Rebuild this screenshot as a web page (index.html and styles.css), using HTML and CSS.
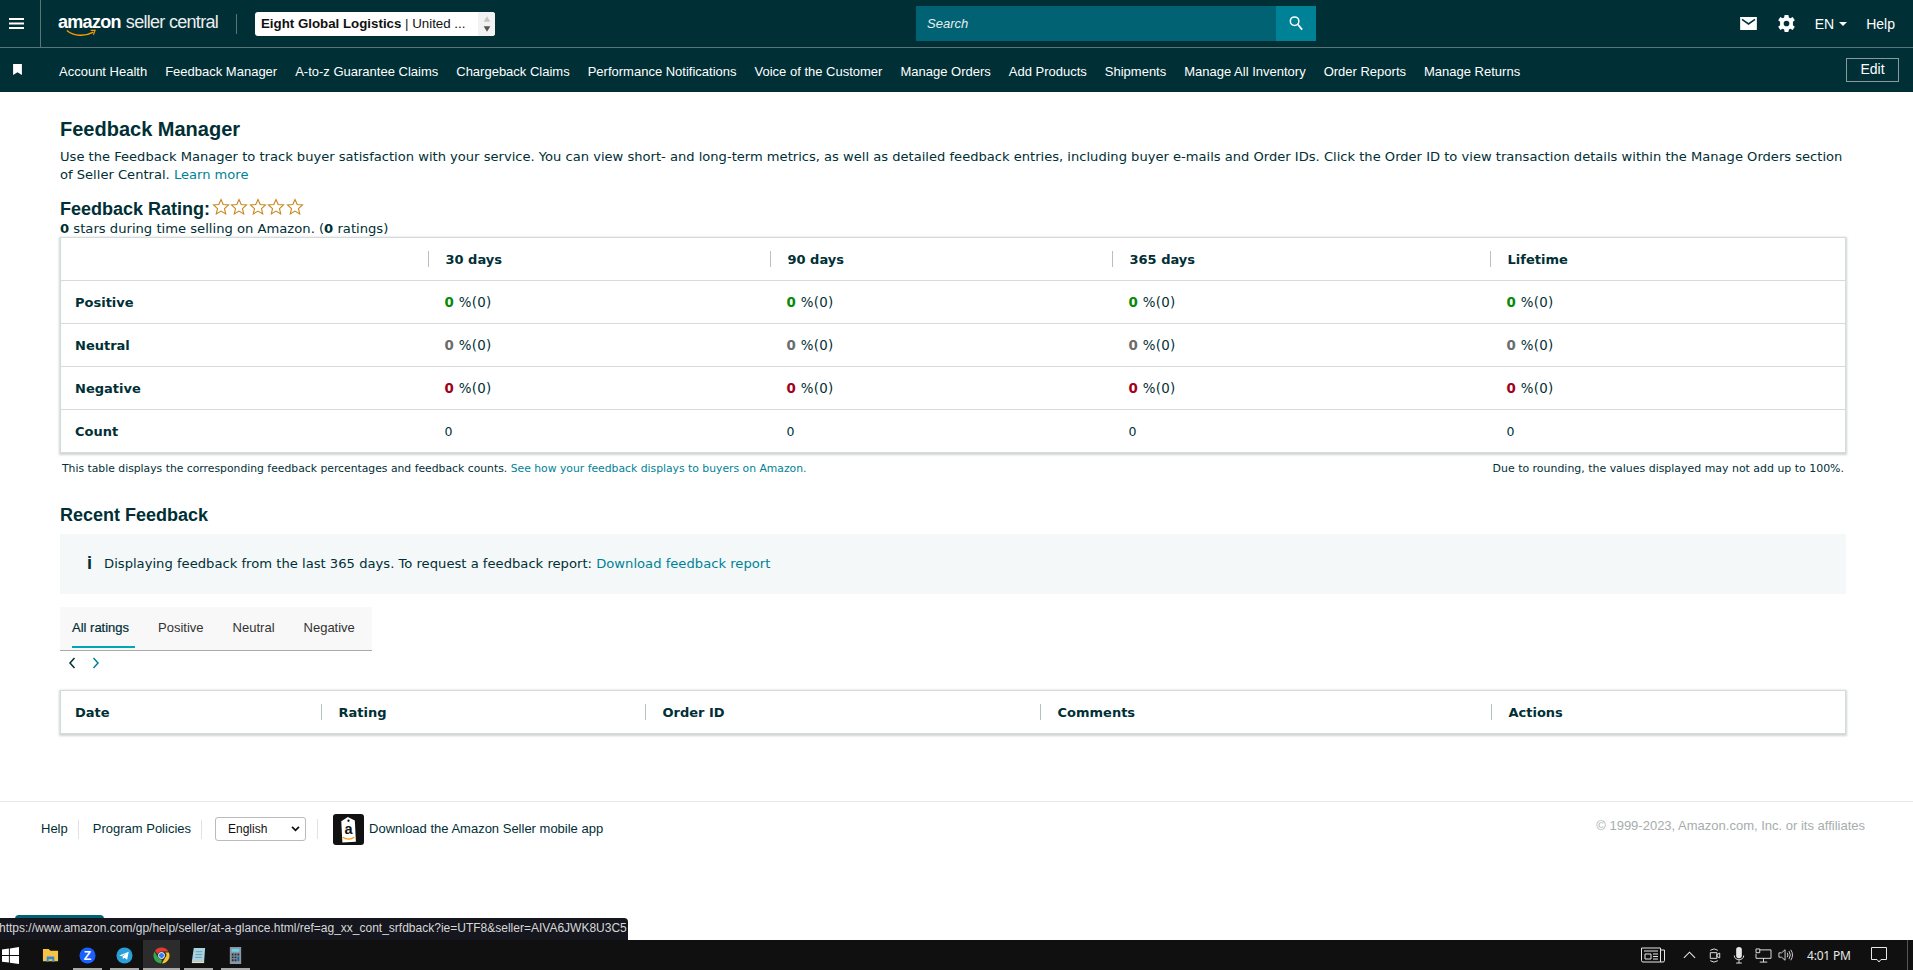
FILE: index.html
```html
<!DOCTYPE html>
<html lang="en">
<head>
<meta charset="utf-8">
<title>Feedback Manager</title>
<link rel="stylesheet" href="styles.css">
</head>
<body>
<div class="page">
<header class="topbar">
  <div class="menu-cell">
    <svg class="ic-menu" viewBox="0 0 15 11"><path d="M0 1h15M0 5.500h15M0 10h15" stroke="#fff" stroke-width="1.800"/></svg>
  </div>
  <div class="brand">
    <span class="logo-word">amazon<svg class="smile" viewBox="0 0 34 9"><path d="M1 1c8 7 21 7 30 2" fill="none" stroke="#f90" stroke-width="1.600"/><path d="M28 1l5 0-2 5" fill="none" stroke="#f90" stroke-width="1.300"/></svg></span>
    <span class="logo-sub">seller central</span>
  </div>
  <div class="account">
    <span class="account-text"><b>Eight Global Logistics</b> | United ...</span>
    <span class="spin"><svg viewBox="0 0 9 18"><path d="M4.500 2l3 5h-6z" fill="#c4c4c4"/><path d="M4.500 16l3-5h-6z" fill="#555"/></svg></span>
  </div>
  <div class="search">
    <span class="search-input">Search</span>
    <span class="search-btn"><svg viewBox="0 0 16 18"><circle cx="6.500" cy="6.500" r="4.500" fill="none" stroke="#fff" stroke-width="1.600"/><path d="M10 10l4.500 5.500" stroke="#fff" stroke-width="1.800"/></svg></span>
  </div>
  <div class="top-right">
    <svg class="ic-mail" viewBox="0 0 18 14"><path d="M0 0h18v14H0z" fill="#fff"/><path d="M2 2.500l7 5 7-5" fill="none" stroke="#002f36" stroke-width="1.600"/></svg>
    <svg class="ic-gear" viewBox="0 0 18 18"><path fill="#fff" fill-rule="evenodd" d="M7 0h4l.5 2.600 1.600.8L15.500 2l2.300 3.500-2 1.700v3.600l2 1.700-2.300 3.500-2.400-1.400-1.600.8L11 18H7l-.5-2.600-1.600-.8L2.500 16 .2 12.500l2-1.700V7.200l-2-1.700L2.500 2l2.400 1.400 1.600-.8zM9 6a3 3 0 1 0 0 6 3 3 0 0 0 0-6z"/></svg>
    <span class="lang">EN<i class="caret"></i></span>
    <span class="help">Help</span>
  </div>
</header>
<nav class="navbar">
  <svg class="ic-bookmark" viewBox="0 0 8 10"><path d="M0 0h8v10L4 7.500 0 10z" fill="#fff"/></svg>
  <ul class="nav-links">
    <li>Account Health</li><li>Feedback Manager</li><li>A-to-z Guarantee Claims</li><li>Chargeback Claims</li><li>Performance Notifications</li><li>Voice of the Customer</li><li>Manage Orders</li><li>Add Products</li><li>Shipments</li><li>Manage All Inventory</li><li>Order Reports</li><li>Manage Returns</li>
  </ul>
  <span class="edit">Edit</span>
</nav>
<main class="content">
  <h1 class="title">Feedback Manager</h1>
  <p class="intro">Use the Feedback Manager to track buyer satisfaction with your service. You can view short- and long-term metrics, as well as detailed feedback entries, including buyer e-mails and Order IDs. Click the Order ID to view transaction details within the Manage Orders section of Seller Central. <a>Learn more</a></p>
  <div class="rating-head"><span class="rating-title">Feedback Rating:</span>
    <span class="stars">
      <svg viewBox="0 0 18 18"><path class="star" d="M9 1.500l2.200 5 5.300.5-4 3.600 1.200 5.300L9 13.100l-4.700 2.800 1.200-5.300-4-3.600 5.300-.5z"/></svg>
      <svg viewBox="0 0 18 18"><path class="star" d="M9 1.500l2.200 5 5.300.5-4 3.600 1.200 5.300L9 13.100l-4.700 2.800 1.200-5.300-4-3.600 5.300-.5z"/></svg>
      <svg viewBox="0 0 18 18"><path class="star" d="M9 1.500l2.200 5 5.300.5-4 3.600 1.200 5.300L9 13.100l-4.700 2.800 1.200-5.300-4-3.600 5.300-.5z"/></svg>
      <svg viewBox="0 0 18 18"><path class="star" d="M9 1.500l2.200 5 5.300.5-4 3.600 1.200 5.300L9 13.100l-4.700 2.800 1.200-5.300-4-3.600 5.300-.5z"/></svg>
      <svg viewBox="0 0 18 18"><path class="star" d="M9 1.500l2.200 5 5.300.5-4 3.600 1.200 5.300L9 13.100l-4.700 2.800 1.200-5.300-4-3.600 5.300-.5z"/></svg>
    </span>
  </div>
  <p class="rating-sub"><b>0</b> stars during time selling on Amazon. (<b>0</b> ratings)</p>
  <table class="tbl metrics">
    <thead><tr><th class="c0"></th><th class="c1"><span>30 days</span></th><th class="c2"><span>90 days</span></th><th class="c3"><span>365 days</span></th><th class="c4"><span>Lifetime</span></th></tr></thead>
    <tbody>
      <tr><th>Positive</th><td><b class="pos">0</b> %(0)</td><td><b class="pos">0</b> %(0)</td><td><b class="pos">0</b> %(0)</td><td><b class="pos">0</b> %(0)</td></tr>
      <tr><th>Neutral</th><td><b class="neu">0</b> %(0)</td><td><b class="neu">0</b> %(0)</td><td><b class="neu">0</b> %(0)</td><td><b class="neu">0</b> %(0)</td></tr>
      <tr><th>Negative</th><td><b class="neg">0</b> %(0)</td><td><b class="neg">0</b> %(0)</td><td><b class="neg">0</b> %(0)</td><td><b class="neg">0</b> %(0)</td></tr>
      <tr><th>Count</th><td class="count">0</td><td class="count">0</td><td class="count">0</td><td class="count">0</td></tr>
    </tbody>
  </table>
  <div class="notes"><span>This table displays the corresponding feedback percentages and feedback counts. <a>See how your feedback displays to buyers on Amazon.</a></span><span class="note-right">Due to rounding, the values displayed may not add up to 100%.</span></div>
  <h2 class="recent">Recent Feedback</h2>
  <div class="info"><span class="info-i">i</span><span>Displaying feedback from the last 365 days. To request a feedback report: <a>Download feedback report</a></span></div>
  <div class="tabs"><span class="tab active">All ratings</span><span class="tab">Positive</span><span class="tab">Neutral</span><span class="tab">Negative</span></div>
  <div class="pager">
    <svg viewBox="0 0 8 12"><path d="M6.500 1L2 6l4.500 5" fill="none" stroke="#002f36" stroke-width="1.500"/></svg>
    <svg viewBox="0 0 8 12"><path d="M1.500 1L6 6l-4.500 5" fill="none" stroke="#008296" stroke-width="1.500"/></svg>
  </div>
  <table class="tbl orders">
    <thead><tr><th class="d0">Date</th><th class="d1"><span>Rating</span></th><th class="d2"><span>Order ID</span></th><th class="d3"><span>Comments</span></th><th class="d4"><span>Actions</span></th></tr></thead>
  </table>
</main>
<footer class="footer">
  <div class="foot-left">
    <span class="foot-link">Help</span><span class="foot-link">Program Policies</span>
    <span class="foot-select">English<svg viewBox="0 0 10 7"><path d="M1 1l4 4 4-4" fill="none" stroke="#111" stroke-width="2"/></svg></span>
    <span class="foot-app">
      <span class="app-badge"><svg viewBox="0 0 32 32"><path d="M9 7l7-4 7 4v22H9z" fill="#fff" transform="rotate(-3 16 16)"/><circle cx="16" cy="7" r="1.200" fill="#111"/><text x="16" y="21" text-anchor="middle" class="app-a">a</text><path d="M10 24c4 2.500 8 2.500 12 0" fill="none" stroke="#f90" stroke-width="1.400"/></svg></span>
      <span class="app-text">Download the Amazon Seller mobile app</span>
    </span>
  </div>
  <div class="copyright">© 1999-2023, Amazon.com, Inc. or its affiliates</div>
</footer>
<div class="status-wrap">
  <div class="peek"></div>
  <div class="status">https://www.amazon.com/gp/help/seller/at-a-glance.html/ref=ag_xx_cont_srfdback?ie=UTF8&amp;seller=AIVA6JWK8U3C5</div>
</div>
<div class="taskbar">
  <div class="task-left">
    <span class="task win"><svg viewBox="0 0 16 16"><path d="M0 2.300L6.500 1.400v6.200H0zM7.400 1.300L16 0v7.600H7.400zM0 8.500h6.500v6.200L0 13.800zM7.400 8.500H16V16l-8.600-1.200z" fill="#fff"/></svg></span>
    <span class="task"><svg viewBox="0 0 18 16"><path d="M1 1h6l2 2h8v11H1z" fill="#f6c445"/><path d="M5 9h8v6h-2v-3H7v3H5z" fill="#2b88d8"/></svg></span>
    <span class="task"><svg viewBox="0 0 18 18"><circle cx="9" cy="9" r="8.500" fill="#1a5fff"/><text x="9" y="13.500" text-anchor="middle" class="z-text">Z</text></svg><i class="run"></i></span>
    <span class="task"><svg viewBox="0 0 18 18"><circle cx="9" cy="9" r="8.500" fill="#2a9fd8"/><path d="M3.500 9l10-4-1.700 8.500-3-2.200-1.500 1.500-.4-2.700 4.300-3.600-5.300 3.200z" fill="#fff"/></svg><i class="run"></i></span>
    <span class="task active"><svg viewBox="0 0 18 18"><path d="M9 .5a8.500 8.500 0 0 1 7.400 4.300H9a4.200 4.200 0 0 0-4 3L2.100 3.900A8.500 8.500 0 0 1 9 .5z" fill="#e33b2e"/><path d="M16.800 5.700A8.500 8.500 0 0 1 9.400 17.500l3.500-6a4.200 4.200 0 0 0 0-5.800z" fill="#f8c32c"/><path d="M8.500 17.500A8.500 8.500 0 0 1 1.600 4.800l3.700 6.300a4.200 4.200 0 0 0 4.300 2.100z" fill="#34a74b"/><circle cx="9" cy="9" r="3.200" fill="#3b7de8" stroke="#fff" stroke-width="1"/></svg><i class="run"></i></span>
    <span class="task"><svg viewBox="0 0 16 18"><path d="M3 1h12l-1 14H1z" fill="#a9d3e0"/><path d="M1 15h13v2H1z" fill="#e8e2c8"/><path d="M5 5h7M5 8h7M4.500 11h7" stroke="#5b8aa0" stroke-width=".8"/></svg><i class="run"></i></span>
    <span class="task"><svg viewBox="0 0 12 18"><path d="M0 0h12v18H0z" fill="#8a96a0"/><path d="M2 2h8v3H2z" fill="#6cd0f0"/><path d="M2 7h2v2H2zM5 7h2v2H5zM8 7h2v2H8zM2 10h2v2H2zM5 10h2v2H5zM2 13h2v2H2zM5 13h2v2H5z" fill="#22303a"/><path d="M8 10h2v5H8z" fill="#1f5fa8"/></svg><i class="run"></i></span>
  </div>
  <div class="task-right">
    <svg class="t-news" viewBox="0 0 24 16"><path d="M.5 1h19v14H2a1.500 1.500 0 0 1-1.500-1.500zM19.500 3h4v10.500a1.500 1.500 0 0 1-1.500 1.500h-2.500M3 4h14M4 7h6v5H4zM12 7h5M12 9.500h5M12 12h5" fill="none" stroke="#e8e8e8"/></svg>
    <svg class="t-up" viewBox="0 0 14 8"><path d="M1 7l6-6 6 6" fill="none" stroke="#e8e8e8" stroke-width="1.200"/></svg>
    <svg class="t-cam" viewBox="0 0 12 18"><path d="M1 6h7v6H1zM8 8l3-1.500v5L8 10zM1 3.500Q5 .5 9 3.500M1 14.500q4 3 8 0" fill="none" stroke="#e8e8e8"/></svg>
    <svg class="t-mic" viewBox="0 0 12 18"><rect x="3" y="0" width="6" height="12" rx="3" fill="#e8e8e8"/><path d="M1 9c0 6 10 6 10 0M6 14v3M3 17h6" fill="none" stroke="#e8e8e8"/></svg>
    <svg class="t-net" viewBox="0 0 18 16"><path d="M5 2h12v9H1V6M9 11v4M5 15h8" fill="none" stroke="#e8e8e8"/><path d="M1 1h4v4H1z" fill="none" stroke="#e8e8e8"/></svg>
    <svg class="t-vol" viewBox="0 0 17 16"><path d="M1 5.500h3L8 2v12L4 10.500H1zM10.500 5.500q1.500 2.500 0 5M12.500 3.500q3 4.500 0 9M14.500 2q4 6 0 12" fill="none" stroke="#e8e8e8"/></svg>
    <span class="clock">4:01 PM</span>
    <svg class="t-note" viewBox="0 0 16 16"><path d="M.5.500h15v12H10L8 15l-2-2.500H.5z" fill="none" stroke="#e8e8e8"/></svg>
    <i class="t-edge"></i>
  </div>
</div>
</div>
</body>
</html>
```
FILE: styles.css
```css
* { box-sizing: border-box; }
html, body { margin: 0; padding: 0; height: 100%; overflow: hidden; background: #fff; }
body { font-family: "DejaVu Sans", Verdana, sans-serif; color: #002f36; font-size: 13.150px; }
a { color: #008296; }
.page { display: flex; flex-direction: column; height: 970px; position: relative; }

.topbar { height: 48px; background: #002f36; display: flex; align-items: center; border-bottom: 1px solid #5c7478; font-family: "Liberation Sans", Arial, sans-serif; color: #fff; flex: none; }
.menu-cell { width: 41px; height: 47px; border-right: 1px solid #5c7478; display: flex; align-items: center; padding-left: 9px; }
.ic-menu { width: 15px; height: 11px; }
.brand { display: flex; align-items: center; margin-left: 17px; width: 179px; gap: 5px; border-right: 1px solid #5c7478; height: 20px; }
.logo-word { font-size: 18px; font-weight: 700; letter-spacing: -.7px; position: relative; line-height: 16px; margin-top: -4px; }
.smile { position: absolute; left: 8px; top: 15px; width: 30px; height: 9px; }
.logo-sub { font-size: 18px; font-weight: 400; letter-spacing: -.7px; line-height: 16px; margin-top: -4px; opacity: .92; }
.account { margin-left: 18px; width: 240px; height: 24px; background: #fff; border-radius: 3px; color: #111; font-size: 13.300px; display: flex; align-items: center; padding-left: 6px; justify-content: space-between; white-space: nowrap; }
.account-text b { font-weight: 700; }
.spin { width: 17px; height: 24px; background: #f2f2f2; display: flex; align-items: center; justify-content: center; border-radius: 0 3px 3px 0; }
.spin svg { width: 14px; height: 20px; }
.search { margin-left: 421px; width: 400px; height: 35px; background: #006272; display: flex; align-items: center; justify-content: space-between; }
.search-input { font-style: italic; font-size: 13px; padding-left: 11px; color: #e6f0f1; }
.search-btn { width: 40px; height: 35px; background: #008296; display: flex; align-items: center; justify-content: center; }
.search-btn svg { width: 16px; height: 17px; }
.top-right { margin-left: auto; display: flex; align-items: center; padding-right: 18px; font-size: 14px; }
.ic-mail { width: 17px; height: 13px; }
.ic-gear { width: 17px; height: 17px; margin-left: 21px; }
.lang { margin-left: 20px; display: flex; align-items: center; }
.caret { width: 0; height: 0; border: 4.500px solid transparent; border-top: 4.500px solid #fff; border-bottom: 0; margin-left: 5px; }
.help { margin-left: 19px; }

.navbar { height: 44px; background: #002f36; display: flex; align-items: center; color: #fff; font-family: "Liberation Sans", Arial, sans-serif; font-size: 13px; flex: none; padding-right: 14px; }
.ic-bookmark { width: 9px; height: 11px; margin: -2px 0 0 13px; }
.nav-links { list-style: none; display: flex; margin: 2px 0 0 37px; padding: 0; gap: 18px; white-space: nowrap; }
.edit { margin-left: auto; width: 53px; height: 24px; border: 1px solid #8a9a9c; text-align: center; line-height: 20px; font-size: 14px; }

.content { padding: 0 67px 0 60px; flex: none; }
.title { font-family: "Liberation Sans", Arial, sans-serif; font-size: 20px; font-weight: 700; line-height: 24px; margin: 25px 0 0; }
.intro { margin: 7px 0 0; line-height: 18px; font-size: 13.080px; }
.rating-head { display: flex; align-items: center; margin-top: 14px; height: 22px; }
.rating-title { font-family: "Liberation Sans", Arial, sans-serif; font-size: 18px; font-weight: 700; }
.stars { display: flex; margin-left: 2px; margin-top: -4px; }
.stars svg { width: 18px; height: 18px; display: block; margin-right: .4px; }
.star { fill: none; stroke: #c7861d; stroke-width: 1.100; }
.rating-sub { margin: 2px 0 0; line-height: 14px; padding-bottom: 1px; }

.tbl { width: 100%; border-collapse: collapse; table-layout: fixed; border: 1px solid #d5dbdb; box-shadow: 0 1px 2px 1px #d0d5d5; }
.tbl th { text-align: left; font-weight: 700; font-size: 13px; padding: 0 0 0 14px; }
.tbl td { padding: 0 0 0 17px; font-size: 13.400px; letter-spacing: .3px; }
.tbl td.count { font-size: 12.500px; letter-spacing: 0; }
.metrics tr { height: 43px; border-bottom: 1px solid #d5dbdb; }
.metrics tbody tr:last-child { border-bottom: 0; }
.metrics thead th { padding-left: 0; }
.metrics thead th span { display: block; border-left: 1px solid #b5c0c0; padding: 1px 0 0 17px; line-height: 15px; }
.c0 { width: 367px; }
.c1, .c2 { width: 342px; }
.c3 { width: 378px; }
.pos { color: #078a07; }
.neu { color: #6c6c6c; }
.neg { color: #a1001c; }
.count { color: #002f36; }
.notes { display: flex; justify-content: space-between; font-size: 10.800px; margin-top: 9px; padding: 0 2px; line-height: 14px; }
.note-right { font-size: 10.950px; }
.recent { font-family: "Liberation Sans", Arial, sans-serif; font-size: 18px; font-weight: 700; margin: 28px 0 0; line-height: 22px; }
.info { height: 60px; margin-top: 8px; background: #f4f8f8; display: flex; align-items: center; padding: 0 0 2px 27px; gap: 12px; }
.info-i { font-weight: 700; font-size: 18px; font-family: "Liberation Sans", Arial, sans-serif; }
.tabs { width: 312px; height: 44px; margin-top: 13px; background: #f8f8f8; border-bottom: 1px solid #a9a9a9; display: flex; font-family: "Liberation Sans", Arial, sans-serif; font-size: 13px; padding-left: 12px; gap: 23px; color: #333; }
.tab { padding-right: 6px; line-height: 41px; height: 41px; }
.tab.active { color: #002f36; border-bottom: 2px solid #00a8b4; -webkit-text-stroke: .2px #002f36; }
.pager { display: flex; gap: 16px; height: 22px; align-items: center; padding-left: 8px; margin-top: 1px; }
.pager svg { width: 8px; height: 12px; }
.orders { margin-top: 16px; }
.orders tr { height: 43px; }
.orders th { padding: 0; }
.orders th span { display: block; border-left: 1px solid #b5c0c0; padding: 1px 0 0 17px; line-height: 15px; }
.orders .d0 { padding-left: 14px; width: 260px; }
.d1 { width: 324px; }
.d2 { width: 395px; }
.d3 { width: 451px; }

.footer { margin-top: 67px; border-top: 1px solid #e7e9e9; padding: 11px 48px 0 41px; display: flex; justify-content: space-between; font-family: "Liberation Sans", Arial, sans-serif; flex: none; }
.foot-left { display: flex; align-items: center; font-size: 13px; height: 32px; }
.foot-link { padding: 0 10px 1px 0; margin-right: 14px; border-right: 1px solid #e0e3e3; line-height: 18px; }
.foot-select { width: 91px; height: 24px; border: 1px solid #bbb; border-radius: 3px; display: flex; align-items: center; justify-content: space-between; padding: 0 5px 0 12px; color: #111; font-size: 12px; margin-left: -1px; }
.foot-select svg { width: 9px; height: 6px; }
.foot-app { display: flex; align-items: center; gap: 5px; border-left: 1px solid #e0e3e3; margin-left: 11px; padding-left: 15px; height: 20px; }
.app-text { padding-bottom: 2px; }
.app-badge { width: 31px; height: 31px; background: #111; border-radius: 3px; flex: none; }
.app-badge svg { width: 31px; height: 31px; display: block; }
.app-a { font-family: "Liberation Sans", sans-serif; font-weight: 700; font-size: 15px; fill: #111; }
.copyright { color: #a6adad; font-size: 13px; padding-top: 5px; }

.status-wrap { position: absolute; left: 0; bottom: 30px; }
.peek { position: absolute; left: 15px; top: -3px; width: 89px; height: 8px; background: #006272; border-radius: 4px 4px 0 0; }
.status { position: relative; background: #15161e; color: #d8d8d8; font-family: "Liberation Sans", Arial, sans-serif; font-size: 12px; height: 22px; line-height: 20px; width: 628px; white-space: nowrap; overflow: hidden; border-radius: 0 4px 0 0; text-indent: -1px; }

.taskbar { position: absolute; left: 0; right: 0; bottom: 0; height: 30px; background: #101010; display: flex; justify-content: space-between; color: #e8e8e8; font-family: "Noto Sans", "Liberation Sans", sans-serif; }
.task-left { display: flex; }
.task { width: 37px; height: 30px; display: flex; align-items: center; justify-content: center; position: relative; }
.task svg { width: 17px; height: 17px; }
.z-text { font-family: "Liberation Sans", sans-serif; font-weight: 700; font-size: 13px; fill: #fff; }
.task.win { width: 32px; justify-content: flex-start; padding-left: 2px; }
.task.active { background: #2c2c2c; }
.run { position: absolute; left: 4px; right: 4px; bottom: 0; height: 2px; background: #aaa; }
.task.active .run { left: 0; right: 0; }
.task-right { display: flex; align-items: center; padding-right: 5px; }
.t-news { width: 24px; height: 16px; margin-right: 18px; }
.t-up { width: 13px; height: 8px; margin-right: 13px; }
.t-cam { width: 12px; height: 17px; margin-right: 12px; }
.t-mic { width: 12px; height: 17px; margin-right: 10px; }
.t-net { width: 17px; height: 15px; margin-right: 5px; }
.t-vol { width: 17px; height: 14px; margin-right: 13px; }
.clock { font-size: 12px; width: 42px; white-space: nowrap; letter-spacing: -.2px; margin-right: 22px; }
.t-note { width: 16px; height: 16px; margin-right: 20px; }
.t-edge { width: 1px; height: 30px; background: #555; }
```
